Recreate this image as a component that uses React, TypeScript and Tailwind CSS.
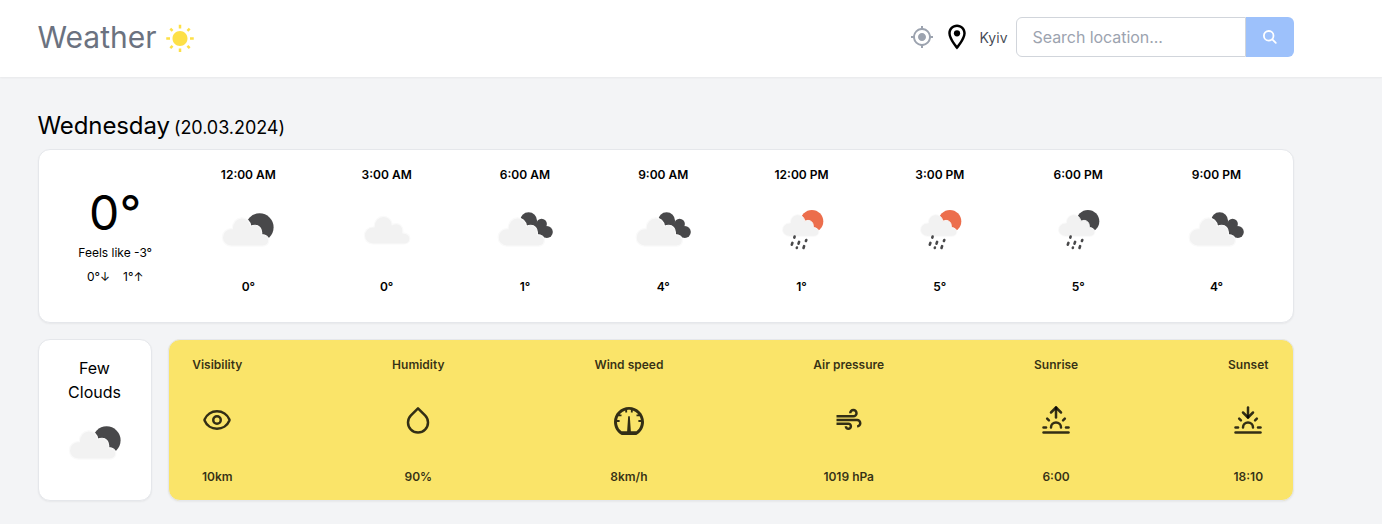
import { MdWbSunny, MdMyLocation, MdOutlineLocationOn, MdAir } from "react-icons/md";
import { LuEye, LuSunrise, LuSunset } from "react-icons/lu";
import { FiDroplet } from "react-icons/fi";
import { ImMeter } from "react-icons/im";
import type { ReactNode } from "react";

type Sky = "few" | "scattered" | "broken" | "rainDay" | "rainNight";

// Cloud outline drawn in a box 46 wide and 28 high.
const CLOUD =
  "M9 28.2A8.5 8.5 0 0 1 9 11.2Q9.6 11 10.2 11C10.4 4.6 14.6 .5 19.5 .5C24 .5 27.8 4 28.3 8.8Q30.3 7.8 32.5 7.8C36.3 7.8 39 11 39 14.8L39 17C43 17 46 19.5 46 22.6C46 25.8 43.5 28.2 40 28.2Z";

function Cloud() {
  return <path d={CLOUD} fill="#f2f2f2" stroke="#fafafa" strokeWidth="1.2" />;
}

function SkyIcon({ sky }: { sky: Sky }) {
  const rain = sky === "rainDay" || sky === "rainNight";
  return (
    <svg width="80" height="80" viewBox="0.4 -0.8 80 80" className="shrink-0">
      {sky === "few" && (
        <>
          <circle cx="52" cy="35.5" r="14" fill="#48484a" />
          <g transform="translate(14.3 25.5) scale(1.02)"><Cloud /></g>
        </>
      )}
      {sky === "scattered" && <g transform="translate(17.3 24)"><Cloud /></g>}
      {sky === "broken" && (
        <>
          <g fill="#48484a">
            <circle cx="44" cy="29" r="8.5" />
            <circle cx="57" cy="32.3" r="5.3" />
            <circle cx="62.2" cy="40.2" r="6" />
            <path d="M44 30L57 31L62 38L60 46L50 42Z" />
          </g>
          <g transform="translate(13 25.5) scale(1.02)"><Cloud /></g>
        </>
      )}
      {rain && (
        <>
          <circle cx="50.3" cy="29.5" r="11.4" fill={sky === "rainDay" ? "#ec6e4c" : "#48484a"} />
          <g transform="translate(20.5 22.5) scale(.8 .78)"><Cloud /></g>
          <g stroke="#48484a" strokeWidth="2.6" strokeLinecap="round">
            <path d="M33 44.8L32.7 45.8M30.8 51.1L30.2 52.9M37.5 50.1L36.9 51.9M44.7 48.2L44.3 49.2M35.3 55.8L35.2 56.1M42.5 54.4L41.9 56.2" />
          </g>
        </>
      )}
    </svg>
  );
}

function SearchIcon() {
  return (
    <svg width="16" height="16" viewBox="0 0 16 16" fill="none" stroke="currentColor" strokeWidth="1.8" strokeLinecap="round">
      <circle cx="6.7" cy="6.8" r="4.8" />
      <path d="M10.3 10.4L13.8 13.9" />
    </svg>
  );
}

const hours: { time: string; sky: Sky; temp: string }[] = [
  { time: "12:00 AM", sky: "few", temp: "0°" },
  { time: "3:00 AM", sky: "scattered", temp: "0°" },
  { time: "6:00 AM", sky: "broken", temp: "1°" },
  { time: "9:00 AM", sky: "broken", temp: "4°" },
  { time: "12:00 PM", sky: "rainDay", temp: "1°" },
  { time: "3:00 PM", sky: "rainDay", temp: "5°" },
  { time: "6:00 PM", sky: "rainNight", temp: "5°" },
  { time: "9:00 PM", sky: "broken", temp: "4°" },
];

const details: { label: string; icon: ReactNode; value: string }[] = [
  { label: "Visibility", icon: <LuEye />, value: "10km" },
  { label: "Humidity", icon: <FiDroplet />, value: "90%" },
  { label: "Wind speed", icon: <ImMeter />, value: "8km/h" },
  { label: "Air pressure", icon: <MdAir />, value: "1019 hPa" },
  { label: "Sunrise", icon: <LuSunrise />, value: "6:00" },
  { label: "Sunset", icon: <LuSunset />, value: "18:10" },
];

export default function App() {
  return (
    <div className="min-h-screen bg-[#f3f4f6] font-['Inter',sans-serif] text-black">
      <nav className="h-[77px] bg-white pl-[37.5px] pt-[17px] shadow-[0_1px_2px_0_rgb(0_0_0/0.05)]">
        <div className="flex h-10 w-[1256px] items-center justify-between">
          <div className="flex items-center gap-2">
            <h1 className="text-3xl text-[#6b7280]">Weather</h1>
            <MdWbSunny className="mt-1 text-3xl text-[#fde047]" />
          </div>
          <div className="flex items-center gap-2">
            <MdMyLocation className="text-2xl text-[#9ca3af]" />
            <MdOutlineLocationOn className="text-3xl" />
            <p className="pt-px text-sm text-[#0f172a]/80">Kyiv</p>
            <form className="flex h-10 items-center">
              <input
                placeholder="Search location..."
                className="h-full w-[230px] rounded-l-md border border-[#d1d5db] px-4 py-2 tracking-[-0.05px] placeholder:text-[#9ca3af] focus:outline-none"
              />
              <button className="flex h-full w-12 items-center justify-center rounded-r-md bg-[#9dc1fb] text-white">
                <SearchIcon />
              </button>
            </form>
          </div>
        </div>
      </nav>
      <main className="flex w-[1293.5px] flex-col pl-[37.5px] pt-[33px]">
        <h2 className="flex h-8 items-end gap-1 text-2xl tracking-[-0.1px]">
          <span>Wednesday</span>
          <span className="text-lg tracking-[-0.05px]">(20.03.2024)</span>
        </h2>
        <section className="mt-[7px] flex h-[174px] rounded-xl border border-[#e5e7eb] bg-white shadow-[0_1px_2px_0_rgb(0_0_0/0.05)]">
          <div className="flex w-[153.4px] shrink-0 flex-col items-center pt-[39px]">
            <span className="text-5xl">0°</span>
            <p className="mt-2 text-xs">Feels like -3°</p>
            <p className="mt-2 flex gap-[13px] text-xs">
              <span>0°↓</span>
              <span>1°↑</span>
            </p>
          </div>
          <div className="-ml-[12.7px] grid w-[1106.4px] shrink-0 grid-cols-8">
            {hours.map((h) => (
              <div key={h.time} className="flex flex-col items-center pt-[17px] text-xs font-semibold">
                <p>{h.time}</p>
                <div className="my-2"><SkyIcon sky={h.sky} /></div>
                <p>{h.temp}</p>
              </div>
            ))}
          </div>
        </section>
        <section className="mt-4 flex h-[162px] gap-4">
          <div className="flex w-[114px] flex-col items-center rounded-xl border border-[#e5e7eb] bg-white pt-4 text-center shadow-[0_1px_2px_0_rgb(0_0_0/0.05)]">
            <p className="w-16">Few Clouds</p>
            <SkyIcon sky="few" />
          </div>
          <div className="flex flex-1 justify-between rounded-xl border border-[#e5e7eb] bg-[#fae469] pl-[23.7px] pr-6 pt-[17px] shadow-[0_1px_2px_0_rgb(0_0_0/0.05)]">
            {details.map((d) => (
              <div key={d.label} className="flex h-[128px] flex-col items-center justify-between text-xs font-semibold text-black/80">
                <p>{d.label}</p>
                <div className="mb-0.5 text-3xl">{d.icon}</div>
                <p>{d.value}</p>
              </div>
            ))}
          </div>
        </section>
      </main>
    </div>
  );
}
